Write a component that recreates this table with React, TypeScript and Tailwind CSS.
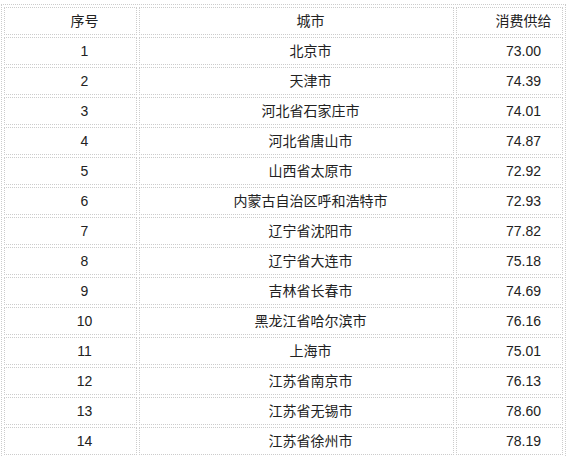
const rows: [number, string, string][] = [
  [1, "北京市", "73.00"],
  [2, "天津市", "74.39"],
  [3, "河北省石家庄市", "74.01"],
  [4, "河北省唐山市", "74.87"],
  [5, "山西省太原市", "72.92"],
  [6, "内蒙古自治区呼和浩特市", "72.93"],
  [7, "辽宁省沈阳市", "77.82"],
  [8, "辽宁省大连市", "75.18"],
  [9, "吉林省长春市", "74.69"],
  [10, "黑龙江省哈尔滨市", "76.16"],
  [11, "上海市", "75.01"],
  [12, "江苏省南京市", "76.13"],
  [13, "江苏省无锡市", "78.60"],
  [14, "江苏省徐州市", "78.19"],
]

const cell =
  "h-[28px] border border-dotted border-[#ccc] p-0 text-center indent-[28px] leading-[26px] whitespace-nowrap"

export default function App() {
  return (
    <div className="min-h-screen bg-white font-['Liberation_Sans','Noto_Sans_CJK_SC',sans-serif] text-[14px] text-[#222]">
      <table className="ml-[1px] mt-[4px] w-[565px] table-fixed border-separate border-spacing-[2px] border border-dotted border-[#ccc]">
        <thead>
          <tr>
            <th className={`${cell} w-[133px] font-normal`}>序号</th>
            <th className={`${cell} w-[315px] font-normal`}>城市</th>
            <th className={`${cell} w-[107px] font-normal`}>消费供给</th>
          </tr>
        </thead>
        <tbody>
          {rows.map(([n, city, v]) => (
            <tr key={n}>
              <td className={cell}>{n}</td>
              <td className={cell}>{city}</td>
              <td className={cell}>{v}</td>
            </tr>
          ))}
        </tbody>
      </table>
    </div>
  )
}
